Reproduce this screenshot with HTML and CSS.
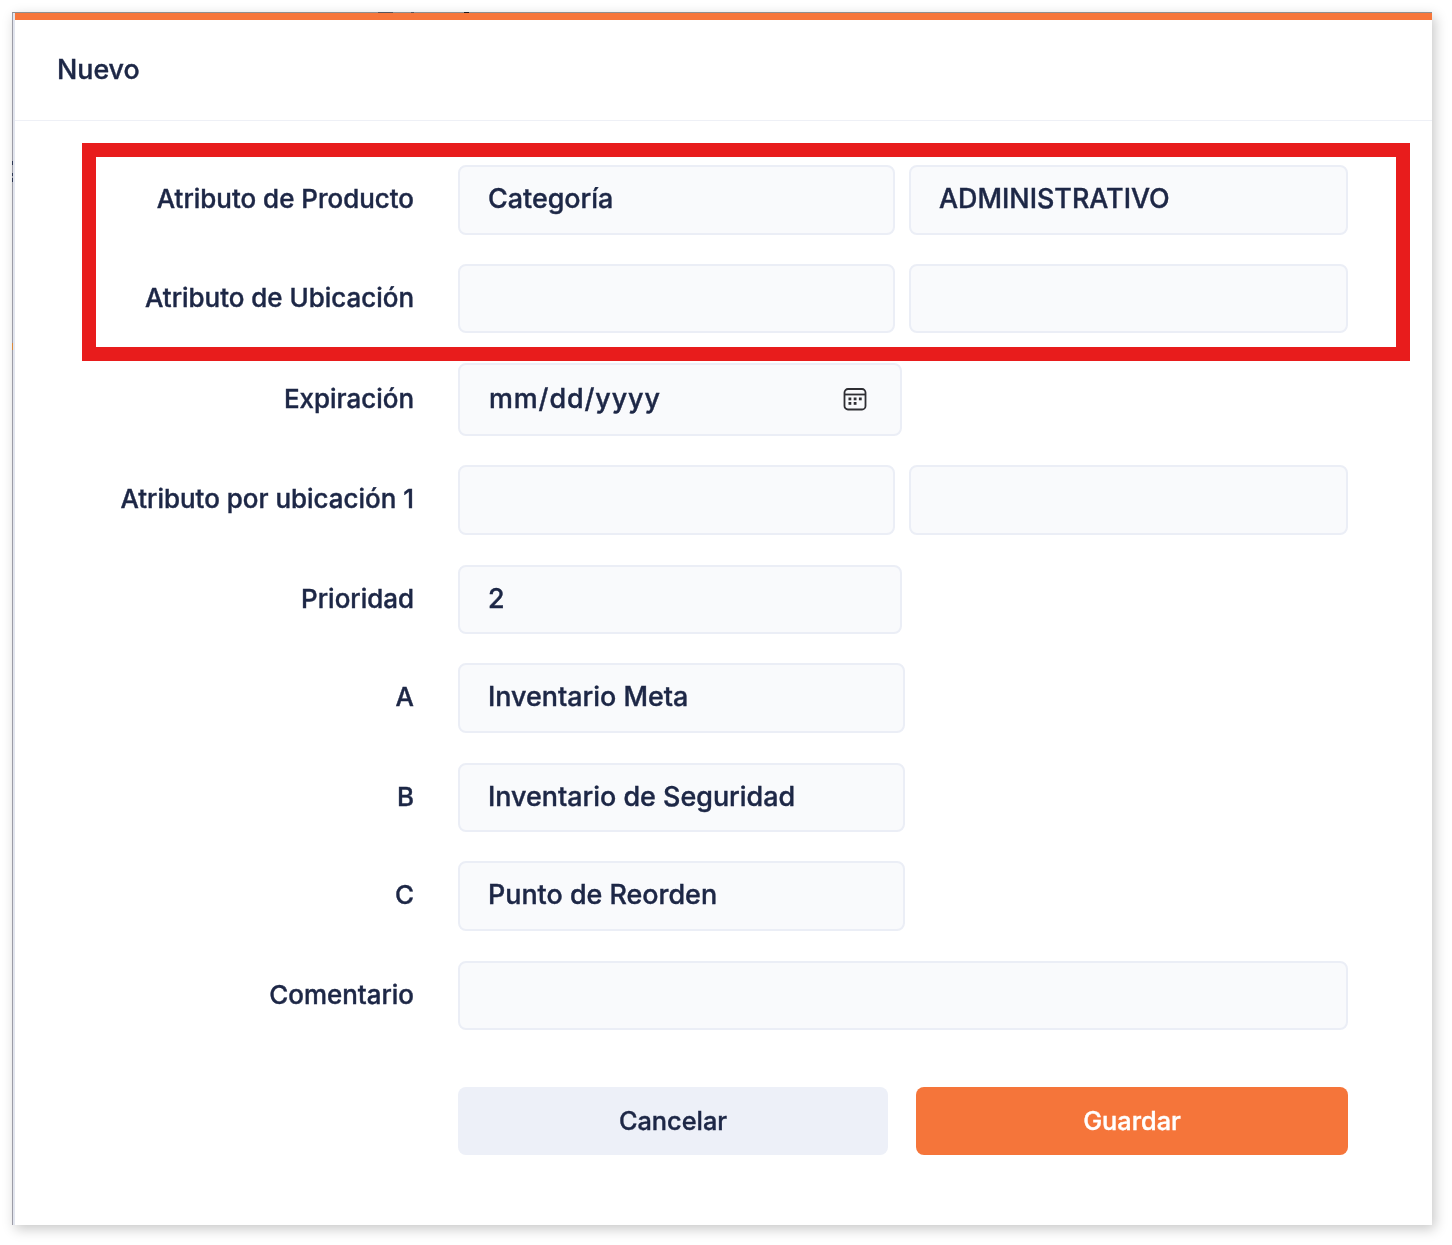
FILE: index.html
```html
<!DOCTYPE html>
<html lang="es">
<head>
<meta charset="utf-8">
<title>Nuevo</title>
<link rel="stylesheet" href="styles.css">
</head>
<body>
<div class="dialog">
  <header class="dialog-head">Nuevo</header>
  <form class="form">
    <div class="row row-first"><div class="label">Atributo de Producto</div><div class="fields"><div class="field w-half">Categoría</div><div class="field w-half2">ADMINISTRATIVO</div></div></div>
    <div class="row row-short"><div class="label">Atributo de Ubicación</div><div class="fields"><div class="field w-half"></div><div class="field w-half2"></div></div></div>
    <div class="row row-date"><div class="label">Expiración</div><div class="fields"><div class="field w-date date">mm/dd/yyyy
      <svg class="cal" viewBox="0 0 24 24" width="24" height="24" fill="none" stroke="#2e2e33" stroke-width="1.8"><rect x="1.5" y="2" width="21" height="20.5" rx="3.5"/><path d="M1.5 7.5h21"/><g fill="#2e2e33" stroke="none"><rect x="5.5" y="10.5" width="2.8" height="2.8"/><rect x="10.7" y="10.5" width="2.8" height="2.8"/><rect x="15.9" y="10.5" width="2.8" height="2.8"/><rect x="5.5" y="15" width="2.8" height="2.8"/><rect x="10.7" y="15" width="2.8" height="2.8"/></g></svg></div></div></div>
    <div class="row"><div class="label">Atributo por ubicación 1</div><div class="fields"><div class="field w-half"></div><div class="field w-half2"></div></div></div>
    <div class="row row-short"><div class="label">Prioridad</div><div class="fields"><div class="field w-date">2</div></div></div>
    <div class="row"><div class="label">A</div><div class="fields"><div class="field w-mid">Inventario Meta</div></div></div>
    <div class="row row-short"><div class="label">B</div><div class="fields"><div class="field w-mid">Inventario de Seguridad</div></div></div>
    <div class="row"><div class="label">C</div><div class="fields"><div class="field w-mid">Punto de Reorden</div></div></div>
    <div class="row row-short"><div class="label">Comentario</div><div class="fields"><div class="field w-full"></div></div></div>
    <div class="actions">
      <button type="button" class="btn btn-cancel">Cancelar</button>
      <button type="button" class="btn btn-save">Guardar</button>
    </div>
  </form>
  <div class="highlight"></div>
</div>
</body>
</html>
```
FILE: styles.css
```css
* { box-sizing: border-box; }
html, body { margin: 0; padding: 0; background: #fff; }
body { width: 1452px; height: 1245px; padding: 12px 20px 20px 12px; font-family: Inter, "Liberation Sans", sans-serif; color: #1d2746; overflow: hidden; }
.dialog { position: relative; width: 1420px; height: 1213px; background: #fff; border-top: 1px solid #8f8f8f; border-left: 1px solid #9c9ca6; box-shadow: 3px 4px 12px rgba(0,0,0,.22), inset 2px 0 0 #e2e5ee; filter: blur(.45px); }
.dialog::before { content: ""; position: absolute; left: -1px; top: 0; width: 1px; height: 340px; background:
  linear-gradient(#2b3550, #2b3550) 0 148px / 1px 4px no-repeat,
  linear-gradient(#2b3550, #2b3550) 0 160px / 1px 3px no-repeat,
  linear-gradient(#2b3550, #2b3550) 0 165px / 1px 4px no-repeat,
  linear-gradient(#d9883a, #d9883a) 0 330px / 1px 7px no-repeat; }
.dialog::after { content: ""; position: absolute; left: 0; top: -1px; width: 470px; height: 1px; background:
  linear-gradient(#55555c, #55555c) 365px 0 / 15px 1px no-repeat,
  linear-gradient(#55555c, #55555c) 398px 0 / 3px 1px no-repeat,
  linear-gradient(#1c1c22, #1c1c22) 451px 0 / 5px 1px no-repeat; }
.dialog-head { height: 108px; margin-left: 2px; border-top: 7px solid #f7763a; border-bottom: 1px solid #eef0f6; padding: 27px 0 0 42px; font-size: 26.8px; line-height: 44px; font-weight: 500; -webkit-text-stroke: .4px currentColor; }
.form { padding: 44px 84px 0 0; }
.row { display: flex; height: 70px; margin-bottom: 30px; align-items: center; }
.row-first { margin-bottom: 29px; }
.row-short { height: 69px; margin-bottom: 29px; }
.row-first + .row-short { margin-bottom: 30px; }
.row-date { height: 73px; margin-bottom: 29px; }
.label { width: 401px; text-align: right; font-size: 25.95px; font-weight: 500; -webkit-text-stroke: .4px currentColor; padding-bottom: 3px; flex: none; }
.fields { display: flex; gap: 14px; margin-left: 44px; height: 100%; }
.field { height: 100%; background: #f9fafc; border: 2px solid #ebeef6; border-radius: 8px; padding: 0 0 4px 28px; font-size: 26.9px; font-weight: 500; -webkit-text-stroke: .4px currentColor; display: flex; align-items: center; }
.w-half { width: 437px; }
.w-half2 { width: 439px; }
.w-date { width: 444px; }
.w-mid { width: 447px; }
.w-full { width: 890px; }
.date { justify-content: space-between; padding-left: 29px; padding-right: 33px; letter-spacing: .9px; }
.cal { flex: none; margin-top: 3px; stroke-linejoin: round; }
.actions { display: flex; gap: 28px; margin: 57px 0 0 445px; }
.btn { height: 68px; border: 0; border-radius: 8px; font: 500 25.3px Inter, "Liberation Sans", sans-serif; -webkit-text-stroke: .4px currentColor; padding: 0 0 2px; }
.btn-cancel { width: 430px; background: #edf0f8; color: #1d2746; }
.btn-save { width: 432px; background: #f5753a; color: #fff; }
.highlight { position: absolute; left: 69px; top: 130px; width: 1328px; height: 218px; border: 14px solid #e81c1c; pointer-events: none; }
```
